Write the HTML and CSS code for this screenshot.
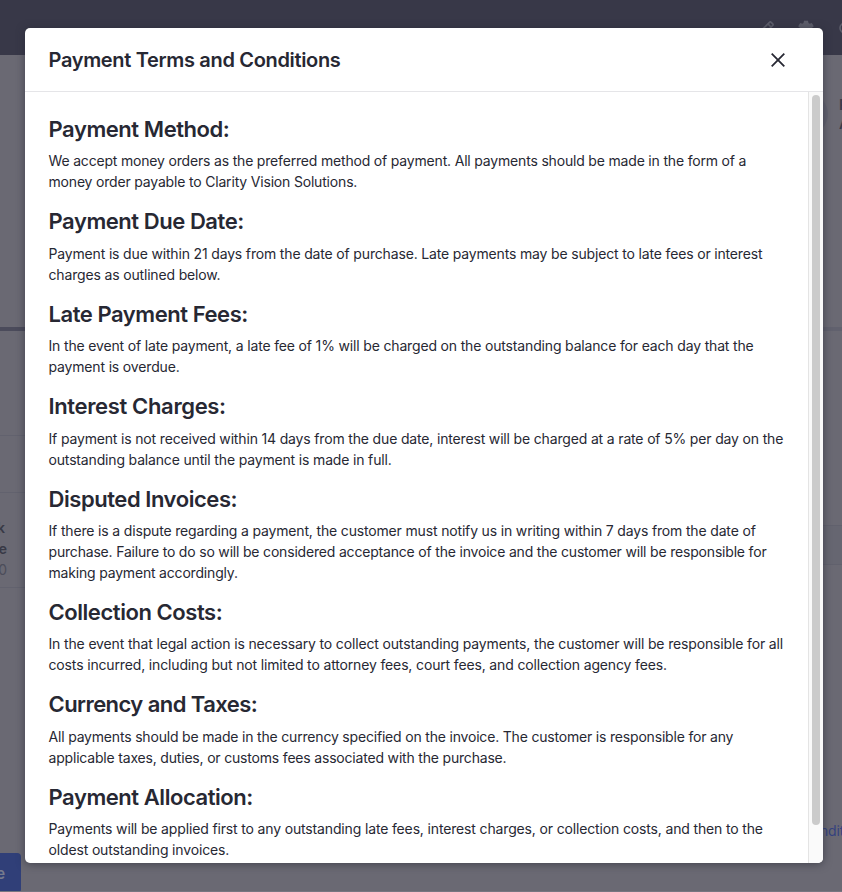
FILE: index.html
```html
<!DOCTYPE html>
<html lang="en">
<head>
<meta charset="utf-8">
<title>Payment Terms and Conditions</title>
<link rel="stylesheet" href="styles.css">
</head>
<body>
<div class="page">
  <div class="topbar">
    <svg class="icon pencil" width="14" height="14" viewBox="0 0 14 14"><path d="M1 13l.8-4L9.500 1.300q.8-.8 1.600 0l1.600 1.600q.8.8 0 1.600L5 12.200zM8 3l3 3M2.500 9l2.700 2.700" fill="none" stroke="currentColor" stroke-width="1.700"/></svg>
    <svg class="icon gear" width="16" height="16" viewBox="0 0 16 16"><path d="M6 .8h4l.5 2.200 1.200.7 2.100-.8 2 3.300-1.600 1.500v1.600l1.600 1.500-2 3.300-2.100-.8-1.200.7-.5 1.700H6L5.500 14l-1.200-.7-2.100.8-2-3.300 1.600-1.500V7.700L.2 6.200l2-3.300 2.100.8L5.500 3z" fill="currentColor"/></svg>
    <svg class="icon help" width="12" height="12" viewBox="0 0 12 12"><circle cx="6" cy="6" r="5" fill="none" stroke="currentColor" stroke-width="1.600"/></svg>
  </div>
  <span class="avatar"></span>
  <span class="peek name">R</span>
  <span class="peek org">A</span>
  <i class="rule tab-active"></i>
  <i class="rule tab-track"></i>
  <i class="rule row-a"></i>
  <i class="rule row-b"></i>
  <i class="rule row-c"></i>
  <i class="rule band"></i>
  <div class="item"><b>k</b><b>e</b><span>0</span></div>
  <a class="terms">ndit</a>
  <div class="submit">e</div>
  <i class="rule base"></i>
</div>
<main class="modal">
  <header class="modal-header">
    <h1>Payment Terms and Conditions</h1>
    <svg class="close" width="16" height="16" viewBox="0 0 16 16"><path d="M1.700 1.700l12.600 12.600M14.300 1.700L1.700 14.300" stroke="currentColor" stroke-width="1.800" fill="none"/></svg>
  </header>
  <div class="modal-body">
    <div class="content">
      <h2>Payment Method:</h2>
      <p>We accept money orders as the preferred method of payment. All payments should be made in the form of a<br>money order payable to Clarity Vision Solutions.</p>
      <h2>Payment Due Date:</h2>
      <p>Payment is due within 21 days from the date of purchase. Late payments may be subject to late fees or interest<br>charges as outlined below.</p>
      <h2>Late Payment Fees:</h2>
      <p>In the event of late payment, a late fee of 1% will be charged on the outstanding balance for each day that the<br>payment is overdue.</p>
      <h2>Interest Charges:</h2>
      <p>If payment is not received within 14 days from the due date, interest will be charged at a rate of 5% per day on the<br>outstanding balance until the payment is made in full.</p>
      <h2>Disputed Invoices:</h2>
      <p>If there is a dispute regarding a payment, the customer must notify us in writing within 7 days from the date of<br><span class="snug">purchase. Failure to do so will be considered acceptance of the invoice and the customer will be responsible for<br>making payment accordingly.</span></p>
      <h2>Collection Costs:</h2>
      <p>In the event that legal action is necessary to collect outstanding payments, the customer will be responsible for all<br>costs incurred, including but not limited to attorney fees, court fees, and collection agency fees.</p>
      <h2>Currency and Taxes:</h2>
      <p>All payments should be made in the currency specified on the invoice. The customer is responsible for any<br>applicable taxes, duties, or customs fees associated with the purchase.</p>
      <h2>Payment Allocation:</h2>
      <p>Payments will be applied first to any outstanding late fees, interest charges, or collection costs, and then to the<br>oldest outstanding invoices.</p>
    </div>
    <div class="scrollbar"><div class="thumb"></div></div>
  </div>
</main>
</body>
</html>
```
FILE: styles.css
```css
* { box-sizing: border-box; }
body {
  margin: 0;
  width: 842px;
  height: 892px;
  overflow: hidden;
  padding: 28px 19px 29px 25px;
  font-family: Inter, sans-serif;
  color: #272833;
}
.page {
  position: absolute;
  inset: 0;
  overflow: hidden;
  background: #6a6973;
}
.topbar { height: 55px; background: #383848; color: #5d5e6b; }
.icon { position: absolute; }
.pencil { left: 760px; top: 21px; }
.gear { left: 798px; top: 20px; }
.help { left: 839px; top: 22px; }
.avatar { position: absolute; left: 786px; top: 93px; width: 42px; height: 42px; border-radius: 50%; background: #62626f; }
.peek { position: absolute; left: 839px; font-size: 15px; line-height: 20px; font-weight: 600; color: #393a49; }
.name { top: 95px; }
.org { top: 114px; }
.rule { position: absolute; left: 0; width: 25px; height: 1px; background: #62626e; }
.tab-active { top: 327px; height: 4px; background: #4b4b5b; }
.tab-track { left: 823px; top: 327px; height: 4px; background: #61616e; }
.row-a { top: 435px; }
.row-b { top: 492px; }
.row-c { top: 587px; }
.band { left: 823px; top: 525px; height: 40px; background: #666671; border: solid #61616d; border-width: 1px 0; }
.item { position: absolute; left: -7px; top: 517px; width: 14px; font-size: 14px; line-height: 21px; text-align: right; color: #383946; }
.item b { display: block; padding-right: 2px; font-weight: 600; }
.item b + b { padding-right: 0; }
.item span { color: #4c4d5a; }
.terms { position: absolute; left: 820px; top: 820px; font-size: 14px; line-height: 21px; letter-spacing: -.2px; color: #35427f; }
.submit { position: absolute; left: -40px; top: 853px; width: 61px; height: 40px; padding-right: 16px; border-radius: 4px; background: #303f78; color: #777b8d; font-size: 15px; font-weight: 600; line-height: 41px; text-align: right; }
.base { top: 891px; width: 842px; background: #777681; }
.modal {
  position: relative;
  display: flex;
  flex-direction: column;
  width: 798px;
  height: 835px;
  background: #fff;
  border-radius: 5px;
  overflow: hidden;
  box-shadow: 0 1px 8px rgba(39, 40, 51, .6);
}
.modal-header {
  display: flex;
  align-items: center;
  justify-content: space-between;
  flex: none;
  height: 64px;
  padding: 0 37px 0 23.5px;
  border-bottom: 1px solid #e5e5e8;
}
h1 { margin: 0; font-size: 20px; line-height: 24px; font-weight: 640; letter-spacing: -.33px; white-space: nowrap; }
.close { color: #272833; }
.modal-body { display: flex; flex: 1; min-height: 0; }
.content { flex: 1; min-width: 0; padding: 24px 0 0 23.5px; overflow: hidden; }
h2 { margin: 0 0 8px; font-size: 22px; line-height: 26.4px; font-weight: 640; letter-spacing: -.44px; white-space: nowrap; }
h2:nth-of-type(4) { letter-spacing: -.35px; }
h2:nth-of-type(7) { letter-spacing: -.56px; }
p { margin: 0 0 16px; font-size: 14px; line-height: 21px; letter-spacing: -.163px; white-space: nowrap; }
p:nth-of-type(1) { letter-spacing: -.182px; }
p:nth-of-type(6) { letter-spacing: -.15px; }
p:nth-of-type(7) { letter-spacing: -.188px; }
p:nth-of-type(8) { letter-spacing: -.15px; }
.snug { letter-spacing: -.188px; }
.scrollbar { width: 15px; padding: 3px 3px 0; background: #fafafa; border-left: 1px solid #e4e4e4; }
.thumb { width: 8px; height: 730px; border-radius: 4px; background: #cbcbcb; }
```
